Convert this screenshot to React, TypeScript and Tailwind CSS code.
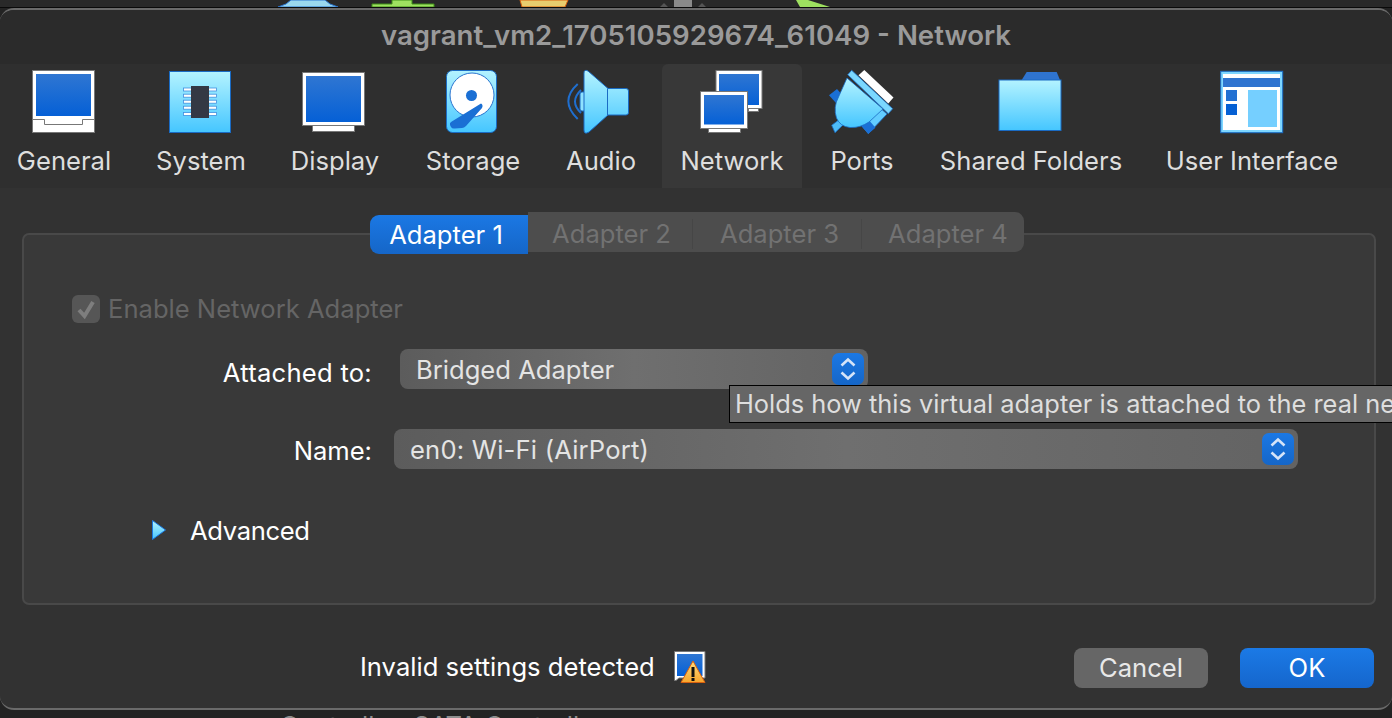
const blueFill = (id: string) => (
  <linearGradient id={id} x1="0" y1="0" x2="0" y2="1">
    <stop offset="0" stopColor="#2f76d2" />
    <stop offset="1" stopColor="#0560d6" />
  </linearGradient>
);

const skyFill = (id: string) => (
  <linearGradient id={id} x1="0" y1="0" x2="0" y2="1">
    <stop offset="0" stopColor="#b4f3ff" />
    <stop offset="1" stopColor="#45c6ff" />
  </linearGradient>
);

function Icon({ children }: { children: React.ReactNode }) {
  return (
    <svg width="64" height="64" viewBox="0 0 64 64" className="block overflow-visible">
      {children}
    </svg>
  );
}

function GeneralIcon() {
  return (
    <Icon>
      <defs>{blueFill("gen")}</defs>
      <rect x="0.5" y="0.5" width="62" height="62" fill="#fff" stroke="#777" />
      <rect x="4" y="4" width="55" height="42" fill="url(#gen)" />
      <path d="M1 49.5H12.5V54.5H50.5V49.5H62" fill="none" stroke="#777" />
    </Icon>
  );
}

function SystemIcon() {
  const pins = [19.5, 25.7, 31.7, 37.7, 44];
  return (
    <Icon>
      <defs>{skyFill("sys")}</defs>
      <rect x="0.5" y="1.5" width="61" height="61" fill="url(#sys)" stroke="#1a6bc4" />
      {pins.map((y) => (
        <g key={y}>
          <rect x="14.5" y={y - 1.5} width="8" height="3" fill="#fff" stroke="#3f8fe0" strokeWidth="0.8" />
          <rect x="39.5" y={y - 1.5} width="8" height="3" fill="#fff" stroke="#3f8fe0" strokeWidth="0.8" />
        </g>
      ))}
      <rect x="22" y="16" width="18" height="32" fill="#343844" />
    </Icon>
  );
}

function DisplayIcon() {
  return (
    <Icon>
      <defs>{blueFill("dis")}</defs>
      <rect x="9.5" y="54" width="42" height="7.5" fill="#fff" stroke="#777" />
      <rect x="-0.5" y="2.5" width="62" height="53" fill="#fff" stroke="#777" />
      <rect x="3" y="6" width="55" height="46" fill="url(#dis)" />
    </Icon>
  );
}

function StorageIcon() {
  return (
    <Icon>
      <defs>{skyFill("sto")}</defs>
      <rect x="5.5" y="0.5" width="50" height="62" rx="6" fill="url(#sto)" stroke="#1a6bc4" />
      <circle cx="31" cy="25" r="22" fill="#fff" stroke="#2a74cf" />
      <circle cx="30.5" cy="25.5" r="5.5" fill="#1a6fd4" />
      <path
        d="M40 33.5L10 52Q8.5 53 9 55L10 57Q11 59 14 58.5L21 58Q23 58 25 56L41 38Q42.5 35 40 33.5Z"
        fill="#1a6fd4"
      />
    </Icon>
  );
}

function AudioIcon() {
  return (
    <Icon>
      <defs>{skyFill("aud")}</defs>
      <path d="M8.7 14Q-10 31 8.7 49" fill="none" stroke="#1f6fd0" strokeWidth="2" />
      <path d="M12 20Q0 31.5 12 43" fill="none" stroke="#1f6fd0" strokeWidth="2" />
      <rect x="11" y="22" width="6" height="19" rx="2" fill="#8fe2ff" stroke="#1a6bc4" />
      <path
        d="M15 3Q15 -1 19 1L39 18.5H57Q59.5 18.5 59.5 21V42.5Q59.5 45 57 45H39L20 62Q15 65 15 60Z"
        fill="url(#aud)"
        stroke="#1a6bc4"
      />
      <path d="M38.5 18.5V45" stroke="#1a6bc4" fill="none" />
    </Icon>
  );
}

function NetworkIcon() {
  return (
    <Icon>
      <defs>{blueFill("net")}</defs>
      <rect x="48.5" y="36" width="10" height="5.5" fill="#fff" stroke="#777" />
      <rect x="16" y="0.5" width="46" height="38" fill="#fff" stroke="#777" />
      <rect x="19" y="4" width="40" height="31" fill="url(#net)" />
      <rect x="8.5" y="56" width="32" height="6.5" fill="#fff" stroke="#777" />
      <rect x="0.5" y="21.5" width="47" height="37" fill="#fff" stroke="#777" />
      <rect x="4" y="25" width="40" height="29.5" fill="url(#net)" />
    </Icon>
  );
}

function PortsIcon() {
  return (
    <Icon>
      <defs>{skyFill("por")}</defs>
      <path d="M34.3 0L63.5 27.5L58.3 33.5L28.5 5.3Z" fill="#fff" />
      <path d="M1.7 55.3L8.3 50.3L13 55L5 62.7Z" fill="#4dbcf8" stroke="#1a6bc4" strokeWidth="0.8" />
      <path d="M38.3 63.7L57 44L48 36L31 55Z" fill="#62cdff" stroke="#1a6bc4" strokeWidth="0.8" />
      <path d="M-1 25.3L7 19L14 27L6 33Z" fill="#1a6fd4" />
      <path d="M30.7 55.3L38.3 49.5L45.5 57.7L38.3 63.7Z" fill="#1a6fd4" />
      <path
        d="M17 8L53 39L39 52Q30 58 20 57.5Q10 56.5 6.5 48Q3 37 8.5 27Z"
        fill="url(#por)"
        stroke="#1a6bc4"
        strokeWidth="0.8"
      />
      <path d="M21.7 0.3L62.7 38.7L58.3 43.7L17.7 4.7Z" fill="#7bd8ff" stroke="#1a6bc4" strokeWidth="0.8" />
    </Icon>
  );
}

function FolderIcon() {
  return (
    <Icon>
      <defs>{skyFill("fol")}</defs>
      <path d="M22.7 10L27.7 2H57.7L61 10Z" fill="#2f74d0" />
      <rect x="0" y="10" width="62" height="50.5" fill="url(#fol)" stroke="#1a6bc4" />
    </Icon>
  );
}

function InterfaceIcon() {
  return (
    <Icon>
      <rect x="0.7" y="1.3" width="62" height="61.4" fill="#7dd6ff" stroke="#1a6bc4" />
      <rect x="3" y="4" width="57" height="56" fill="#fff" />
      <rect x="3" y="8" width="57" height="9" fill="#2f74d0" />
      <rect x="6" y="20" width="11" height="11" fill="#2270d2" />
      <rect x="6" y="34" width="11" height="11" fill="#0560d4" />
      <rect x="28" y="20" width="29" height="37" fill="#75cfff" />
    </Icon>
  );
}

function Stepper() {
  return (
    <div className="h-8 w-8 shrink-0 rounded-[7px] bg-gradient-to-b from-[#1b78e4] to-[#1566c8]">
      <svg width="32" height="32" viewBox="0 0 32 32" className="block">
        <path
          d="M9.5 12.5L16 6.5L22.5 12.5M9.5 19.5L16 25.5L22.5 19.5"
          fill="none"
          stroke="#d5e4f8"
          strokeWidth="2.6"
        />
      </svg>
    </div>
  );
}

function Combo({ label, className }: { label: string; className: string }) {
  return (
    <div
      className={`flex h-10 items-center justify-between rounded-[8px] bg-gradient-to-r from-[#5c5c5c] via-[#6f6f6f] to-[#636363] pl-4 pr-1 text-[#e4e4e4] ${className}`}
    >
      <span className="pt-[2px]">{label}</span>
      <Stepper />
    </div>
  );
}

const items = [
  { label: "General", width: "w-[128px]", icon: <GeneralIcon /> },
  { label: "System", width: "w-[146px]", icon: <SystemIcon /> },
  { label: "Display", width: "w-[122px]", icon: <DisplayIcon /> },
  { label: "Storage", width: "w-[154px]", icon: <StorageIcon /> },
  { label: "Audio", width: "w-[102px]", icon: <AudioIcon /> },
  { label: "Network", width: "ml-[10px] w-[140px] rounded-t-md bg-[#383838]", icon: <NetworkIcon /> },
  { label: "Ports", width: "w-[120px]", icon: <PortsIcon /> },
  { label: "Shared Folders", width: "w-[218px]", icon: <FolderIcon /> },
  { label: "User Interface", width: "w-[224px]", icon: <InterfaceIcon /> },
];

export default function App() {
  return (
    <div className="relative flex h-[718px] w-[1392px] flex-col overflow-hidden bg-[#232323] font-['Inter',sans-serif] text-[25.6px] leading-[30px]">
      <svg width="1392" height="8" viewBox="0 0 1392 8" className="block shrink-0">
        <rect width="1392" height="7" fill="#292929" />
        <path d="M278 7L286 4L291 0H325L330 4L338 7Z" fill="#9ad8ee" stroke="#2a74cf" />
        <path d="M372 7V4H392V0H412V4H434V7Z" fill="#9ee060" stroke="#3f8f18" />
        <path d="M520 0H568L565 7H522Z" fill="#e8cd6e" stroke="#d9600f" />
        <rect x="674" y="0" width="18" height="7" fill="#8a8a8a" />
        <path d="M660 7L664 3L668 7ZM698 7L702 3L706 7Z" fill="#555" />
        <path d="M778 7H800L796 0H808L830 7Z" fill="#9ee060" />
        <rect y="7" width="1392" height="1" fill="#0a0a0a" />
      </svg>

      <div className="flex h-[702px] shrink-0 flex-col overflow-hidden rounded-[14px] border-y-2 border-[#6a6a6a] bg-[#323232]">
        <div className="h-[54px] shrink-0 bg-[#2b2b2b] text-center text-[27.6px] leading-[50px] font-semibold text-[#9a9a9a]">
          vagrant_vm2_1705105929674_61049 - Network
        </div>

        <div className="flex h-[124px] shrink-0 bg-[#2f2f2f] text-[#dedede]">
          {items.map((item) => (
            <div key={item.label} className={`flex shrink-0 flex-col items-center pt-[6px] ${item.width}`}>
              {item.icon}
              <span className="mt-[12px] whitespace-nowrap">{item.label}</span>
            </div>
          ))}
        </div>

        <div className="pr-[16px] pl-[22px]">
          <div className="relative z-10 mt-[24px] ml-[348px] flex h-[42px] items-start">
            <div className="mt-[3px] flex h-[39px] w-[158px] items-center justify-center rounded-l-[9px] bg-gradient-to-b from-[#1b78e4] to-[#1566c8] pr-[6px] text-white">
              Adapter 1
            </div>
            <div className="flex h-[40px] w-[496px] items-center rounded-r-[9px] bg-[#4d4d4d] pt-[4px] text-[#727272]">
              <span className="w-[165px] border-r border-[#464646] pl-[3px] text-center">Adapter 2</span>
              <span className="w-[169px] border-r border-[#464646] pl-[5px] text-center">Adapter 3</span>
              <span className="w-[162px] pl-[10px] text-center">Adapter 4</span>
            </div>
          </div>

          <div className="mt-[-21px] h-[372px] rounded-[7px] border-2 border-[#494949] bg-[#393939] pt-[60px]">
            <div className="ml-[48px] flex h-[28px] items-center gap-2 text-[#656565]">
              <div className="h-7 w-7 shrink-0 rounded-[6px] bg-[#565656]">
                <svg width="28" height="28" viewBox="0 0 28 28" className="block">
                  <path d="M7 15L12.5 21L21 7" fill="none" stroke="#7e7e7e" strokeWidth="4" />
                </svg>
              </div>
              <span>Enable Network Adapter</span>
            </div>

            <div className="mt-[26px] flex items-start text-white">
              <span className="w-[348px] pt-[9px] text-right tracking-[0.25px]">Attached to:</span>
              <Combo label="Bridged Adapter" className="ml-[28px] w-[468px]" />
            </div>

            <div className="mt-[40px] flex items-start text-white">
              <span className="w-[348px] pt-[7px] text-right">Name:</span>
              <Combo label="en0: Wi-Fi (AirPort)" className="ml-[22px] w-[904px] tracking-[0.2px]" />
            </div>

            <div className="mt-[51px] ml-[127px] flex h-[20px] items-center text-white">
              <svg width="16" height="20" viewBox="0 0 16 20" className="block shrink-0">
                <defs>{skyFill("adv")}</defs>
                <path d="M1.5 0.5L14.5 10L1.5 19.5Z" fill="url(#adv)" stroke="#1a78e0" />
              </svg>
              <span className="ml-[23px] translate-y-[1px] tracking-[-0.35px]">Advanced</span>
            </div>
          </div>
        </div>

        <div className="mt-[43px] flex items-center pr-[18px] pl-[360px]">
          <span className="w-[314px] pb-[2px] whitespace-nowrap text-white">Invalid settings detected</span>
          <svg width="34" height="34" viewBox="0 0 34 34" className="block shrink-0">
            <defs>
              {blueFill("inv")}
              <linearGradient id="warn" x1="0" y1="0" x2="0" y2="1">
                <stop offset="0" stopColor="#ffdc7e" />
                <stop offset="1" stopColor="#f8a62c" />
              </linearGradient>
            </defs>
            <path d="M0.5 0.5H31V27H5L2 29.5H0.5Z" fill="#fff" stroke="#777" />
            <rect x="3" y="3" width="25.5" height="22" fill="url(#inv)" />
            <path d="M19 10L31 31.5H7Z" fill="url(#warn)" stroke="#d9600f" strokeLinejoin="round" />
            <rect x="17.5" y="16" width="3" height="10" fill="#111" />
            <rect x="17.5" y="27" width="3" height="3" fill="#111" />
          </svg>
          <div className="ml-auto flex gap-[32px]">
            <div className="flex h-10 w-[134px] items-center justify-center rounded-[8px] bg-[#666666] pb-[1px] text-[#e8e8e8]">
              Cancel
            </div>
            <div className="flex h-10 w-[134px] items-center justify-center rounded-[8px] bg-gradient-to-b from-[#1b7ae6] to-[#1566cc] pb-[1px] text-white">
              OK
            </div>
          </div>
        </div>
      </div>

      <div className="h-[8px] shrink-0 overflow-hidden pl-[280px] leading-[32px] text-[#8e8e8e]">
        Controller: SATA Controller
      </div>

      <div className="absolute top-[385px] left-[729px] h-[38px] w-[720px] border border-black bg-[#666666] pl-[5px] text-[25.4px] leading-[36px] whitespace-nowrap text-[#dedede]">
        Holds how this virtual adapter is attached to the real network
      </div>
    </div>
  );
}
